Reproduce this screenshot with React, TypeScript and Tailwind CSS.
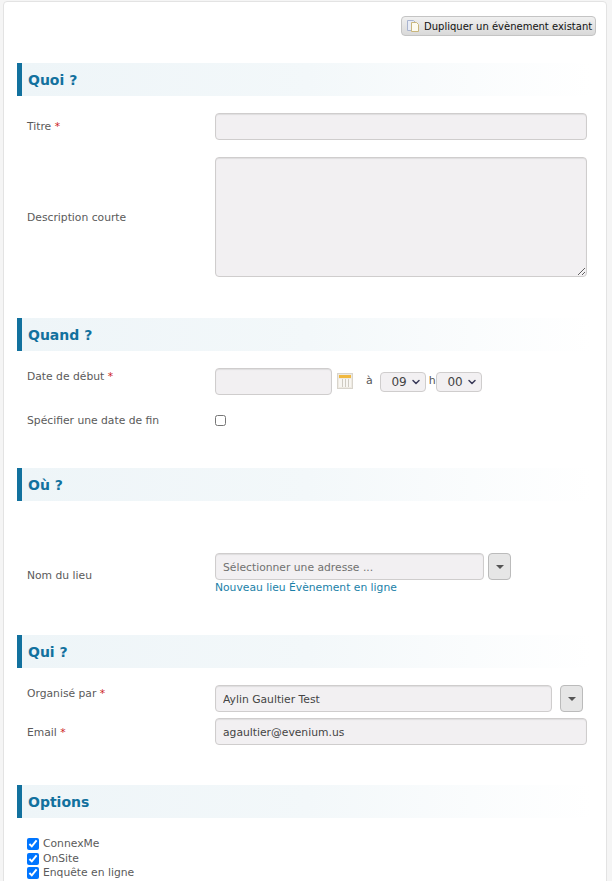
import { ChevronDown } from "lucide-react";

const font = "font-['DejaVu_Sans',Verdana,sans-serif]";
const inputCls =
  "h-[27px] rounded-[4px] border border-[#cfcdcd] bg-[#f2f0f2] px-[7px] pt-[2px] text-[10.75px] text-[#444] shadow-[inset_0_1px_1px_rgba(0,0,0,0.08)] outline-none placeholder:text-[#707070]";

const SectionTitle = ({ title }: { title: string }) => (
  <div className="flex h-[33px] w-[574px] items-center border-l-[5px] border-[#12719e] bg-gradient-to-r from-[#eef5f8] via-[#f3f8fa] to-white pl-[6px] pt-[2px]">
    <h2 className="text-[14px] font-bold text-[#12719e]">{title}</h2>
  </div>
);

const Label = ({ text, required, top }: { text: string; required?: boolean; top?: boolean }) => (
  <label className={`w-[188px] shrink-0 text-[10.75px] text-[#5a5a5a] ${top ? "self-start pt-[1px]" : "pt-[2px]"}`}>
    {text}
    {required && <span className="text-[#c22]"> *</span>}
  </label>
);

const ArrowButton = () => (
  <button className="flex h-[27px] w-[23px] items-center justify-center rounded-[4px] border border-[#bbb] bg-[#e6e6e6]">
    <span className="h-0 w-0 border-x-[4px] border-t-[4px] border-x-transparent border-t-[#555]" />
  </button>
);

const TimeSelect = ({ value }: { value: string }) => (
  <div className="flex h-[20px] w-[46px] items-center justify-end gap-[3px] rounded-[4px] border border-[#cfcdcd] bg-[#f2f0f2] pr-[3px] text-[12px] text-[#444]">
    {value}
    <ChevronDown size={12} strokeWidth={3} className="text-[#3b3b5a]" />
  </div>
);

const Check = ({ text }: { text: string }) => (
  <label className="flex h-[14.5px] items-center gap-[4px] text-[10.75px] text-[#5a5a5a]">
    <input type="checkbox" defaultChecked className="m-0 h-[12px] w-[12px]" />
    {text}
  </label>
);

export default function App() {
  return (
    <div className={`${font} h-[881px] overflow-hidden bg-[#f5f5f5] pl-[3px] pr-[5px] pt-px`}>
      <div className="h-[900px] rounded-[4px] border border-[#e3e3e3] bg-white px-[13px]">
        <div className="flex justify-end pt-[14px]">
          <button className="-mr-[3px] flex h-[20px] w-[195px] items-center gap-[4px] whitespace-nowrap rounded-[4px] border border-[#c4c4c4] bg-gradient-to-b from-[#f0f0f0] to-[#d9d9d9] pl-[4px] text-[10px] text-[#111]">
            <svg width="14" height="14" viewBox="0 0 14 14" className="shrink-0">
              <path d="M1.5 1.5h6l2 2v8h-8z" fill="#e8ecf6" stroke="#a9b4cf" />
              <path d="M5.5 3.5h5l2 2v7h-7z" fill="#fdfbf0" stroke="#c9b67c" />
            </svg>
            Dupliquer un évènement existant
          </button>
        </div>

        <div className="mt-[27px]">
          <SectionTitle title="Quoi ?" />
        </div>
        <div className="mt-[17px] flex items-center pl-[10px]">
          <Label text="Titre" required />
          <input className={`${inputCls} w-[372px]`} />
        </div>
        <div className="mt-[17px] flex items-center pl-[10px]">
          <Label text="Description courte" />
          <textarea className={`${inputCls} h-[120px] w-[372px]`} />
        </div>

        <div className="mt-[41px]">
          <SectionTitle title="Quand ?" />
        </div>
        <div className="mt-[17px] flex h-[27px] items-center pl-[10px]">
          <Label text="Date de début" required top />
          <input className={`${inputCls} w-[117px]`} />
          <svg width="16" height="16" viewBox="0 0 16 16" className="ml-[5px] -mt-[2px]">
            <rect x="0.5" y="0.5" width="15" height="15" fill="#eeeae2" stroke="#d8d4cc" />
            <rect x="2" y="2" width="12" height="3" fill="#f0b840" />
            <path d="M2 6h12v8H2z" fill="#f8f6f2" />
            <path d="M5.5 6v8M8.5 6v8M11.5 6v8" stroke="#cfcbc2" />
          </svg>
          <span className="ml-[13px] text-[11px] text-[#555]">à</span>
          <div className="ml-[7px] mt-[1px]">
            <TimeSelect value="09" />
          </div>
          <span className="ml-[3px] text-[11px] text-[#555]">h</span>
          <div className="mt-[1px]">
            <TimeSelect value="00" />
          </div>
        </div>
        <div className="mt-[13px] flex h-[24px] items-center pl-[10px]">
          <Label text="Spécifier une date de fin" />
          <input type="checkbox" className="m-0 h-[11px] w-[11px]" />
        </div>

        <div className="mt-[36px]">
          <SectionTitle title="Où ?" />
        </div>
        <div className="mt-[52px] flex items-center pl-[10px]">
          <Label text="Nom du lieu" />
          <div>
            <div className="flex gap-[4px]">
              <input className={`${inputCls} w-[269px]`} placeholder="Sélectionner une adresse ..." />
              <ArrowButton />
            </div>
            <div className="text-[10.75px] text-[#1a7fa8]">Nouveau lieu Évènement en ligne</div>
          </div>
        </div>

        <div className="mt-[39px]">
          <SectionTitle title="Qui ?" />
        </div>
        <div className="mt-[17px] flex items-center pl-[10px]">
          <Label text="Organisé par" required top />
          <input className={`${inputCls} w-[337px]`} defaultValue="Aylin Gaultier Test" />
          <div className="ml-[8px]">
            <ArrowButton />
          </div>
        </div>
        <div className="mt-[6px] flex items-center pl-[10px]">
          <Label text="Email" required />
          <input className={`${inputCls} w-[372px]`} defaultValue="agaultier@evenium.us" />
        </div>

        <div className="mt-[40px]">
          <SectionTitle title="Options" />
        </div>
        <div className="mt-[19px] flex flex-col pl-[10px]">
          <Check text="ConnexMe" />
          <Check text="OnSite" />
          <Check text="Enquête en ligne" />
        </div>
      </div>
    </div>
  );
}
